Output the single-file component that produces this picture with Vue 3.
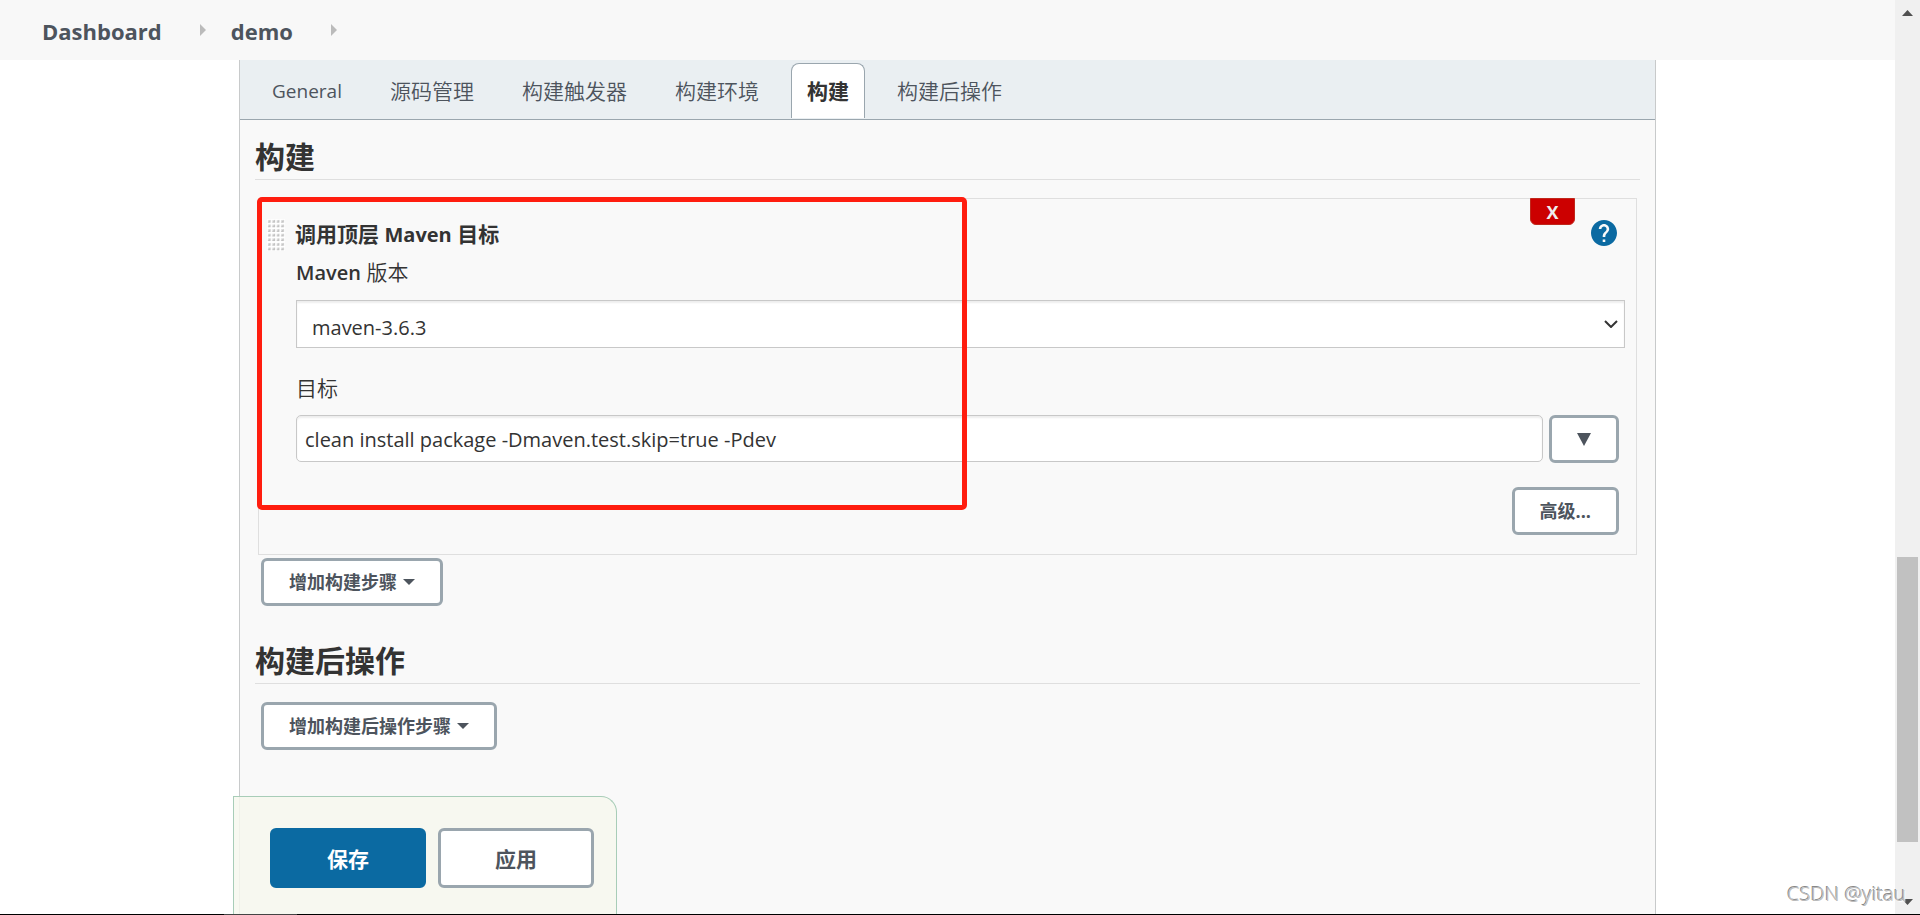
<script setup>
import { ref } from 'vue'

const crumbs = ['Dashboard', 'demo']
const tabs = ['General', '源码管理', '构建触发器', '构建环境', '构建', '构建后操作']
const activeTab = ref('构建')
const version = ref('maven-3.6.3')
const goals = ref('clean install package -Dmaven.test.skip=true -Pdev')
</script>

<template>
  <div class="page">
    <header class="breadcrumbs">
      <template v-for="c in crumbs" :key="c">
        <a href="#" class="crumb">{{ c }}</a>
        <svg class="crumb-arrow" width="6" height="12" viewBox="0 0 6 12" aria-hidden="true"><path d="M0 0L6 6L0 12Z" fill="#bbb" /></svg>
      </template>
    </header>

    <main class="stage">
      <div class="panel">
        <nav class="tabs">
          <button v-for="t in tabs" :key="t" type="button" class="tab" :class="{ active: t === activeTab, latin: t === 'General' }" @click="activeTab = t">{{ t }}</button>
        </nav>

        <section class="section">
          <h2 class="heading">构建</h2>
          <div class="step">
            <div class="step-title">
              <svg class="grip" width="18" height="32" aria-hidden="true">
                <defs>
                  <pattern id="grip-dots" width="4.4" height="4.6" patternUnits="userSpaceOnUse">
                    <rect width="4.4" height="4.6" fill="#fff" />
                    <path d="M.6 3.6H3.6V.6Z" fill="#aaa" />
                    <rect x="1" y="1" width="2.6" height="2.6" fill="#ccc" fill-opacity=".7" />
                  </pattern>
                </defs>
                <rect width="18" height="32" fill="url(#grip-dots)" />
              </svg>
              <b class="step-name">调用顶层 <span class="name-latin">Maven</span> 目标</b>
            </div>
            <div class="step-tools">
              <button type="button" class="delete" aria-label="删除">X</button>
              <a href="#" class="help" aria-label="帮助">
                <svg width="26" height="26" viewBox="2 2 20 20" aria-hidden="true"><path fill="#0b6aa2" d="M12 2C6.480 2 2 6.480 2 12s4.480 10 10 10 10-4.480 10-10S17.520 2 12 2zm1 17h-2v-2h2v2zm2.070-7.750l-.9.920C13.450 12.900 13 13.500 13 15h-2v-.5c0-1.100.450-2.100 1.170-2.830l1.240-1.260c.370-.360.590-.860.590-1.410 0-1.100-.9-2-2-2s-2 .9-2 2H8c0-2.210 1.790-4 4-4s4 1.790 4 4c0 .880-.360 1.680-.930 2.250z" /></svg>
              </a>
            </div>
            <label class="label" for="version"><span class="medium">Maven</span> 版本</label>
            <div class="select-wrap">
              <select id="version" v-model="version" class="select">
                <option>maven-3.6.3</option>
              </select>
              <svg class="chevron" width="14" height="8" viewBox="0 0 14 8" aria-hidden="true"><path d="M1 1L7 7L13 1" fill="none" stroke="#333" stroke-width="2" /></svg>
            </div>
            <label class="label goals-label" for="goals">目标</label>
            <div class="goals">
              <input id="goals" v-model="goals" type="text" class="input" />
              <button type="button" class="btn expand" aria-label="展开">
                <svg width="14" height="13" viewBox="0 0 14 13" aria-hidden="true"><path d="M0 0H14L7 13Z" fill="#4d545d" /></svg>
              </button>
            </div>
            <div class="advanced">
              <button type="button" class="btn">高级...</button>
            </div>
            <div class="highlight"></div>
          </div>
          <button type="button" class="btn add">增加构建步骤<svg class="caret" width="12" height="6" viewBox="0 0 12 6" aria-hidden="true"><path d="M0 0H12L6 6Z" fill="#4d545d" /></svg></button>
        </section>

        <section class="section post">
          <h2 class="heading">构建后操作</h2>
          <button type="button" class="btn add">增加构建后操作步骤<svg class="caret" width="12" height="6" viewBox="0 0 12 6" aria-hidden="true"><path d="M0 0H12L6 6Z" fill="#4d545d" /></svg></button>
        </section>

        <div class="actions">
          <button type="button" class="btn big primary">保存</button>
          <button type="button" class="btn big">应用</button>
        </div>
      </div>
    </main>

    <div class="scrollbar" aria-hidden="true">
      <svg width="11" height="6" viewBox="0 0 11 6"><path d="M0 6L5.500 0L11 6Z" fill="#505050" /></svg>
      <div class="track"><div class="thumb"></div></div>
      <svg width="11" height="6" viewBox="0 0 11 6"><path d="M0 0L5.500 6L11 0Z" fill="#505050" /></svg>
    </div>
    <div class="watermark">CSDN @yitau</div>
    <div class="edge"><div class="edge-part"></div></div>
  </div>
</template>

<style>
body {
  margin: 0;
  background: #fff;
}
</style>

<style scoped>
.page {
  position: relative;
  display: flex;
  flex-direction: column;
  box-sizing: border-box;
  height: 100vh;
  padding-right: 25px;
  overflow: hidden;
  color: #333;
  font: 20px/30px "Open Sans", "Noto Sans CJK SC", sans-serif;
}
.page *,
.page *::before {
  box-sizing: border-box;
}
button,
input,
select {
  font: inherit;
  color: inherit;
  margin: 0;
}
.breadcrumbs {
  display: flex;
  align-items: center;
  flex: none;
  height: 60px;
  padding-left: 42px;
  background: #f8f8f8;
}
.crumb {
  padding-top: 2px;
  color: #4d545d;
  font-size: 22px;
  font-weight: 700;
  text-decoration: none;
}
.crumb-arrow {
  margin: 0 25px 0 38px;
}
.stage {
  flex: 1;
  display: flex;
  min-height: 0;
  padding: 0 239px;
}
.panel {
  position: relative;
  flex: 1;
  min-width: 0;
  border: solid #c8cacb;
  border-width: 0 1px;
  background: #f9f9f9;
}
.tabs {
  display: flex;
  align-items: flex-end;
  gap: 16px;
  height: 60px;
  padding: 0 16px 1px;
  background: #eaeff2;
  border-bottom: 1px solid #9aa6ae;
}
.tab {
  height: 55px;
  padding: 0 15px 1px;
  border: 1px solid transparent;
  border-bottom: 0;
  border-radius: 8px 8px 0 0;
  background: none;
  color: #4d545d;
  font-size: 21px;
  font-weight: 350;
  white-space: nowrap;
}
.tab.latin {
  font-size: 19px;
  font-weight: 400;
}
.tab.active {
  border-color: #9aa6ae;
  background: #fff;
  color: #333;
  font-weight: 700;
}
.section {
  padding: 15px 15px 0;
}
.heading {
  margin: 0 0 18px;
  padding-bottom: 1px;
  border-bottom: 1px solid #dfdfdf;
  font-size: 30px;
  line-height: 43px;
  font-weight: 700;
}
.step {
  position: relative;
  margin: 0 3px 3px;
  padding: 20px 11px 19px 37px;
  border: 1px solid #dfdfdf;
}
.step-title {
  display: flex;
  align-items: center;
  gap: 10px;
  height: 32px;
  margin-left: -29px;
}
.step-name {
  padding-bottom: 2px;
  font-size: 21px;
}
.name-latin {
  font-size: 20px;
}
.step-tools {
  position: absolute;
  top: -1px;
  right: 19px;
  display: flex;
  gap: 16px;
}
.delete {
  width: 45px;
  height: 27px;
  padding: 0;
  border: 1px solid #c0281c;
  border-radius: 0 0 6px 6px;
  background: #c00;
  color: #eee;
  font-size: 18px;
  line-height: 24px;
  font-weight: 700;
}
.help {
  height: 26px;
  margin-top: 22px;
}
.help svg {
  display: block;
}
.label {
  display: block;
  margin-top: 6px;
  font-size: 21px;
  font-weight: 350;
}
.medium {
  font-size: 20px;
  font-weight: 600;
}
.select-wrap {
  position: relative;
  margin-top: 12px;
}
.select {
  display: block;
  width: 100%;
  height: 48px;
  padding: 7px 40px 0 15px;
  border: 1px solid #c8c8c8;
  border-radius: 0;
  background: #fff;
  box-shadow: inset 0 2px 2px #eee;
  appearance: none;
}
.chevron {
  position: absolute;
  top: 20px;
  right: 7px;
}
.goals-label {
  margin-top: 25px;
}
.goals {
  display: flex;
  gap: 6px;
  margin-top: 12px;
  padding-right: 6px;
}
.input {
  flex: 1;
  min-width: 0;
  height: 47px;
  padding: 2px 8px 0;
  border: 1px solid #c8c8c8;
  border-radius: 5px;
  background: #fff;
  box-shadow: inset 0 2px 2px #eee;
}
.btn {
  height: 48px;
  padding: 0 25px;
  border: 3px solid #9aa6ae;
  border-radius: 6px;
  background: #fff;
  color: #4d545d;
  font-size: 18px;
  font-weight: 700;
  white-space: nowrap;
}
.expand {
  width: 70px;
}
.advanced {
  display: flex;
  justify-content: flex-end;
  margin-top: 24px;
  padding-right: 6px;
}
.highlight {
  position: absolute;
  top: -2px;
  left: -2px;
  width: 710px;
  height: 313px;
  border: 5px solid #ff1d0f;
  border-radius: 5px;
  pointer-events: none;
}
.add {
  display: flex;
  align-items: center;
  margin-left: 6px;
}
.caret {
  margin-left: 6px;
}
.post {
  padding-top: 33px;
}
.actions {
  position: absolute;
  left: -7px;
  bottom: 0;
  display: flex;
  gap: 12px;
  padding: 31px 22px 27px 36px;
  border: 1px solid #a8cdb8;
  border-bottom: 0;
  border-radius: 0 16px 0 0;
  background: rgba(247, 248, 238, 0.85);
}
.big {
  width: 156px;
  height: 60px;
  padding-top: 2px;
  font-size: 21px;
}
.primary {
  border-color: #0b6aa2;
  background: #0b6aa2;
  color: #fff;
}
.scrollbar {
  position: absolute;
  top: 0;
  right: 0;
  bottom: 0;
  width: 25px;
  display: flex;
  flex-direction: column;
  align-items: center;
  padding: 10px 2px;
  background: #f0f0f0;
}
.track {
  flex: 1;
  align-self: stretch;
  display: flex;
  flex-direction: column;
  padding: 9px 0;
}
.track::before {
  content: "";
  flex: 532;
}
.track::after {
  content: "";
  flex: 48;
}
.thumb {
  flex: 285;
  background: #c1c1c1;
}
.watermark {
  position: absolute;
  right: 14px;
  bottom: 6px;
  color: #bbb;
  font-family: "Noto Sans", sans-serif;
  font-size: 20px;
  font-weight: 300;
  text-shadow: 1px 1px 1px #fff, -1px -1px 0 #888;
}
.edge {
  position: absolute;
  right: 0;
  bottom: 0;
  left: 0;
  height: 1px;
  padding-left: 224px;
  background: #000;
}
.edge-part {
  width: 73px;
  height: 1px;
  background: #444;
}
</style>
